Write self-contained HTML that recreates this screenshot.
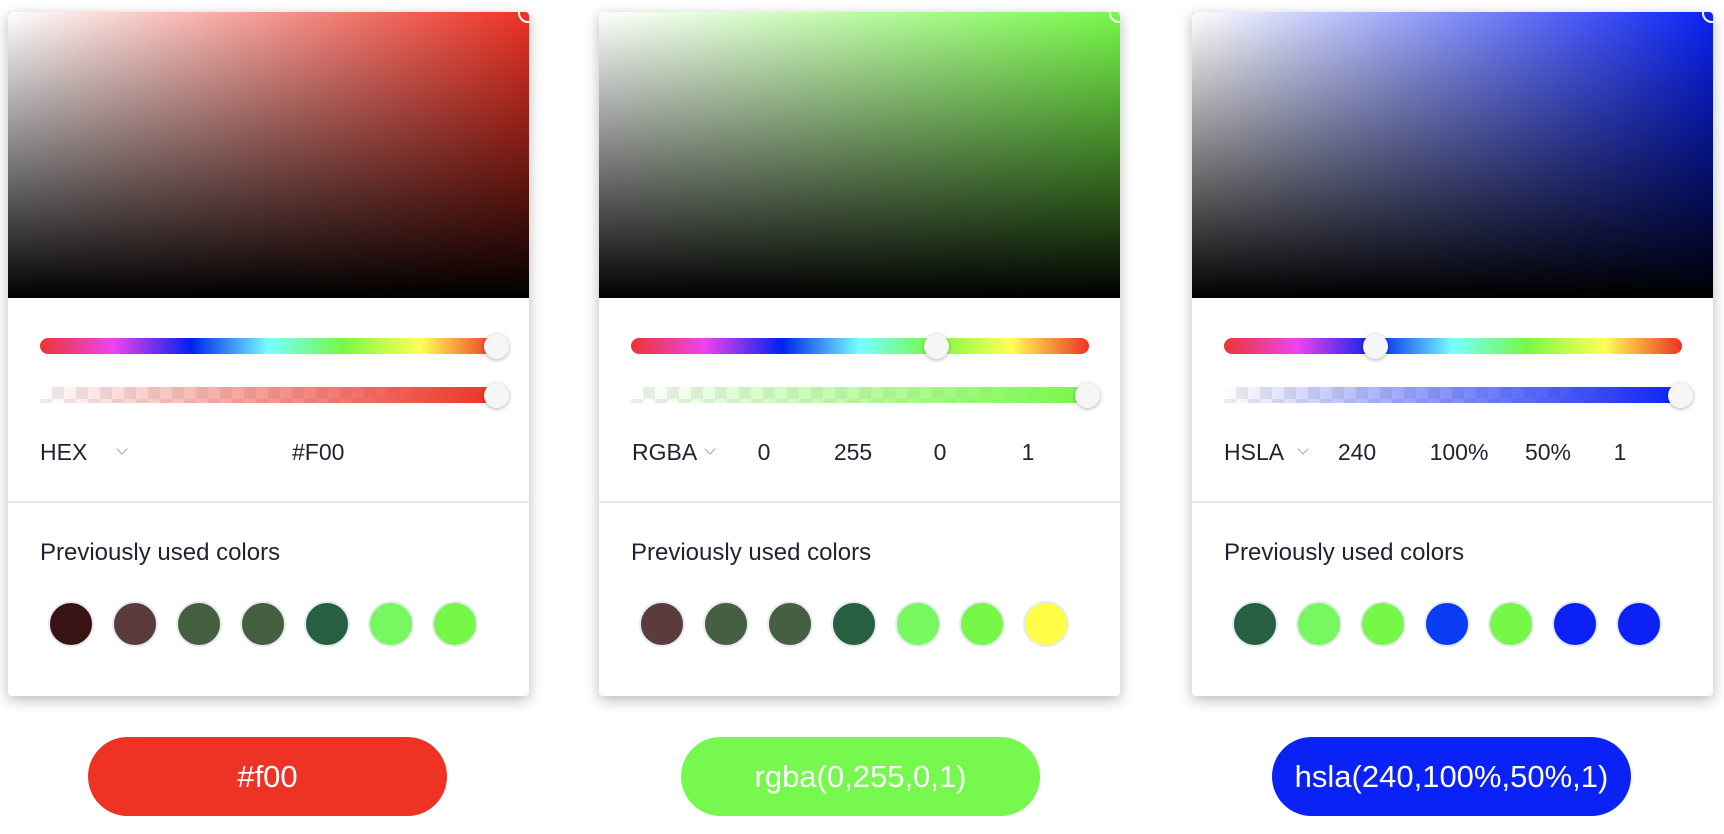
<!DOCTYPE html>
<html><head><meta charset="utf-8"><style>
*{box-sizing:border-box;margin:0;padding:0}
body{width:1724px;height:834px;background:#fff;position:relative;overflow:hidden;font-family:"Liberation Sans",Helvetica,Arial,sans-serif;color:#1f2330}
.card{position:absolute;top:12px;width:521px;height:684px;background:#fff;border-radius:4px;box-shadow:0 4px 14px rgba(0,0,0,.28)}
.sv{position:absolute;left:0;top:0;width:521px;height:286px;border-radius:4px 4px 0 0;overflow:hidden}
.sv .w{position:absolute;inset:0;background:linear-gradient(to right,#fff,rgba(255,255,255,0))}
.sv .b{position:absolute;inset:0;background:linear-gradient(to top,#000,rgba(0,0,0,0))}
.sv .t{position:absolute;right:-9px;top:-9px;width:20px;height:20px;border:2px solid #fff;border-radius:50%}
.hue{position:absolute;left:32px;top:326px;width:458px;height:16px;border-radius:8px;background:linear-gradient(to right,#ee3333,#ee44ee 16%,#0022ee 33%,#77ffff 50%,#77f844 66%,#ffff55 83%,#ee3322)}
.alpha{position:absolute;left:32px;top:375px;width:458px;height:16px;background-image:linear-gradient(45deg,#ececec 25%,transparent 25%,transparent 75%,#ececec 75%),linear-gradient(45deg,#ececec 25%,transparent 25%,transparent 75%,#ececec 75%);background-size:24px 24px;background-position:0 0,12px 12px;background-color:#fff;border-radius:0 8px 8px 0}
.alpha i{position:absolute;inset:0;border-radius:0 8px 8px 0}
.th{position:absolute;width:25px;height:25px;border-radius:50%;background:#f6f6f6;box-shadow:0 1px 4px rgba(0,0,0,.3)}
.lbl{position:absolute;top:426px;font-size:23px;line-height:28px}
.num{position:absolute;top:426px;font-size:23px;line-height:28px;transform:translateX(-50%)}
.chev{position:absolute;top:433px;width:8px;height:8px;border-right:1.5px solid #9aa8bb;border-bottom:1.5px solid #9aa8bb;transform:rotate(45deg)}
.hr{position:absolute;left:0;top:489px;width:521px;height:2px;background:#e6e9ee}
.prev{position:absolute;left:32px;top:527px;font-size:24px;line-height:28px}
.sw{position:absolute;top:589px;width:46px;height:46px;border-radius:50%;border:2px solid #e8eaee}
.pill{position:absolute;top:737px;width:359px;height:79px;border-radius:40px;color:#fff;font-size:31px;text-align:center;line-height:79px}
</style></head><body>

<div class="card" style="left:8px">
 <div class="sv" style="background:#ee3224"><div class="w"></div><div class="b"></div><div class="t"></div></div>
 <div class="hue"></div><div class="th" style="left:476px;top:322px"></div>
 <div class="alpha"><i style="background:linear-gradient(to right,rgba(238,50,36,0),#ee3224)"></i></div><div class="th" style="left:476px;top:371px"></div>
 <div class="lbl" style="left:32px">HEX</div><div class="chev" style="left:110px"></div>
 <div class="lbl" style="left:284px">#F00</div>
 <div class="hr"></div>
 <div class="prev">Previously used colors</div>
 <div class="sw" style="left:40px;background:#3a1414"></div>
 <div class="sw" style="left:104px;background:#5a3c3c"></div>
 <div class="sw" style="left:168px;background:#455f41"></div>
 <div class="sw" style="left:232px;background:#455f41"></div>
 <div class="sw" style="left:296px;background:#275f41"></div>
 <div class="sw" style="left:360px;background:#77f860"></div>
 <div class="sw" style="left:424px;background:#77f848"></div>
</div>

<div class="card" style="left:599px">
 <div class="sv" style="background:#77f848"><div class="w"></div><div class="b"></div><div class="t"></div></div>
 <div class="hue"></div><div class="th" style="left:325px;top:322px"></div>
 <div class="alpha"><i style="background:linear-gradient(to right,rgba(119,248,72,0),#77f848)"></i></div><div class="th" style="left:476px;top:371px"></div>
 <div class="lbl" style="left:33px">RGBA</div><div class="chev" style="left:107px"></div>
 <div class="num" style="left:165px">0</div>
 <div class="num" style="left:254px">255</div>
 <div class="num" style="left:341px">0</div>
 <div class="num" style="left:429px">1</div>
 <div class="hr"></div>
 <div class="prev">Previously used colors</div>
 <div class="sw" style="left:40px;background:#5a3c3c"></div>
 <div class="sw" style="left:104px;background:#455f41"></div>
 <div class="sw" style="left:168px;background:#455f41"></div>
 <div class="sw" style="left:232px;background:#275f41"></div>
 <div class="sw" style="left:296px;background:#77f860"></div>
 <div class="sw" style="left:360px;background:#77f848"></div>
 <div class="sw" style="left:424px;background:#ffff4a"></div>
</div>

<div class="card" style="left:1192px">
 <div class="sv" style="background:#0a22f5"><div class="w"></div><div class="b"></div><div class="t"></div></div>
 <div class="hue"></div><div class="th" style="left:171px;top:322px"></div>
 <div class="alpha"><i style="background:linear-gradient(to right,rgba(10,34,245,0),#0a22f5)"></i></div><div class="th" style="left:476px;top:371px"></div>
 <div class="lbl" style="left:32px">HSLA</div><div class="chev" style="left:107px"></div>
 <div class="num" style="left:165px">240</div>
 <div class="num" style="left:267px">100%</div>
 <div class="num" style="left:356px">50%</div>
 <div class="num" style="left:428px">1</div>
 <div class="hr"></div>
 <div class="prev">Previously used colors</div>
 <div class="sw" style="left:40px;background:#275f41"></div>
 <div class="sw" style="left:104px;background:#77f860"></div>
 <div class="sw" style="left:168px;background:#77f848"></div>
 <div class="sw" style="left:232px;background:#0a3cf5"></div>
 <div class="sw" style="left:296px;background:#77f848"></div>
 <div class="sw" style="left:360px;background:#0a22f5"></div>
 <div class="sw" style="left:424px;background:#0a22f5"></div>
</div>

<div class="pill" style="left:88px;background:#ee3224">#f00</div>
<div class="pill" style="left:681px;background:#77f84f">rgba(0,255,0,1)</div>
<div class="pill" style="left:1272px;background:#0a22f5">hsla(240,100%,50%,1)</div>
</body></html>
